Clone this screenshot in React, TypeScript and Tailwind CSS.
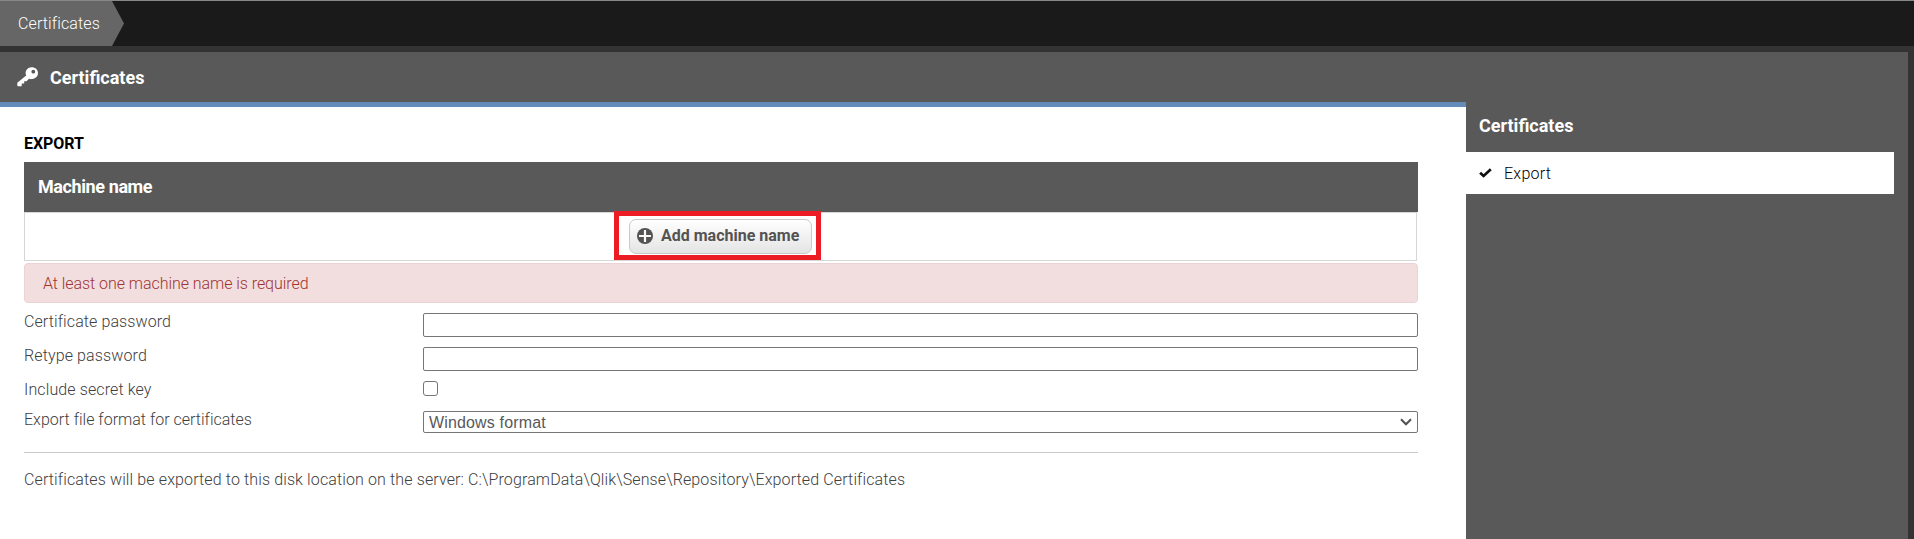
import type { ReactNode } from "react";

function KeyIcon() {
  return (
    <svg width="22" height="20" viewBox="0 0 22 20" className="shrink-0">
      <path
        fill="#fff"
        fillRule="evenodd"
        d="M14.6 0.3C10.800 0.300 8.300 3.300 8.700 6.800C8.750 7.400 8.900 7.900 9.200 8.400L0.300 15.700V18.500C0.300 19 0.600 19.300 1.100 19.300H4.700V16.600H7.200V14.200H9.500L12 11.700C12.700 12 13.600 12.200 14.500 12.100C18.200 12 21 9.600 21 6C21 2.700 18.300 0.300 14.600 0.300ZM16.300 2.800A1.900 1.900 0 1 1 16.300 6.600A1.900 1.900 0 0 1 16.300 2.800Z"
      />
    </svg>
  );
}

function PlusCircleIcon() {
  return (
    <svg width="16" height="16" viewBox="0 0 16 16" className="shrink-0">
      <circle cx="8" cy="8" r="8" fill="#545352" />
      <path d="M8 2V14M2 8H14" stroke="#fafafa" strokeWidth="2.200" />
    </svg>
  );
}

function CheckIcon() {
  return (
    <svg width="13" height="10" viewBox="0 0 13 10" className="shrink-0">
      <path d="M1.100 4.700L4.600 8L11.800 1.200" fill="none" stroke="#111" strokeWidth="2.700" />
    </svg>
  );
}

function ChevronIcon() {
  return (
    <svg width="12" height="8" viewBox="0 0 12 8" className="shrink-0">
      <path d="M1 1.300L6 6.300L11 1.300" fill="none" stroke="#505050" strokeWidth="2" />
    </svg>
  );
}

function Row({ label, className, children }: { label: ReactNode; className: string; children: ReactNode }) {
  return (
    <div className={`flex items-start ${className}`}>
      <div className="w-[399px] shrink-0 pt-px leading-5">{label}</div>
      {children}
    </div>
  );
}

export default function App() {
  return (
    <div className="flex h-[539px] w-full flex-col overflow-hidden bg-[#333] font-[Roboto,sans-serif] text-base font-light text-[#404040]">
      <header className="flex h-[46px] shrink-0 border-t border-[#858885] bg-[#1a1a1a]">
        <div className="flex w-[124px] items-center bg-[#666] pl-[18px] text-white [clip-path:polygon(0_0,112px_0,100%_50%,112px_100%,0_100%)]">
          <span className="tracking-[0.12px]">Certificates</span>
        </div>
      </header>

      <div className="mt-1.5 mr-1.5 flex min-h-0 flex-1 flex-col bg-[#595959]">
        <div className="flex h-[50px] shrink-0 items-center gap-[11px] pl-[17px] text-lg font-bold text-white">
          <KeyIcon />
          <h1 className="pt-0.5 leading-6">Certificates</h1>
        </div>

        <div className="flex min-h-0 flex-1">
          <main className="w-[1466px] shrink-0 border-t-[5px] border-[#638cba] bg-white pr-12 pl-6">
            <h2 className="pt-[27px] pb-2 leading-5 font-bold tracking-[-0.05px] text-black">EXPORT</h2>
            <div className="flex h-[50px] items-center bg-[#595959] pl-3.5 text-lg font-bold text-white">
              <span className="tracking-[-0.4px]">Machine name</span>
            </div>
            <div className="mr-px flex h-[49px] justify-center border border-[#d6d6d6]">
              <div className="-mt-0.5 -ml-1.5 flex h-[49px] w-[207px] shrink-0 items-center justify-end border-[5px] border-[#eb1c24] bg-white pt-0.5 pr-1">
                <button className="flex h-[35px] w-[183px] items-center gap-2 rounded-[7px] border border-[#c9c9c9] bg-linear-to-b from-white to-[#e4e4e4] pb-px pl-[7px] font-bold text-[#545352]">
                  <PlusCircleIcon />
                  <span>Add machine name</span>
                </button>
              </div>
            </div>

            <div className="mt-0.5 flex h-10 items-center rounded-[4px] border border-[#ebd3d5] bg-[#f2dede] pt-0.5 pl-[18px] text-[#9e3432]">
              <span className="tracking-[-0.05px]">At least one machine name is required</span>
            </div>

            <Row className="mt-2 h-[34px]" label={<span className="tracking-[0.1px]">Certificate password</span>}>
              <input type="text" className="mt-0.5 h-6 flex-1 rounded-[2px] border border-[#767676] outline-none" />
            </Row>
            <Row className="h-[34px]" label={<span className="tracking-[0.12px]">Retype password</span>}>
              <input type="text" className="mt-0.5 h-6 flex-1 rounded-[2px] border border-[#767676] outline-none" />
            </Row>
            <Row className="h-[30px]" label={<span className="tracking-[0.12px]">Include secret key</span>}>
              <input
                type="checkbox"
                className="mt-0.5 size-[15px] appearance-none rounded-[3px] border-[1.5px] border-[#767676] bg-white"
              />
            </Row>
            <Row className="h-[43px]" label={<span className="tracking-[0.01px]">Export file format for certificates</span>}>
              <div className="mt-0.5 flex h-[22px] flex-1 items-center justify-between rounded-[2px] border border-[#767676] pr-[5px] pl-[5px] font-['Liberation_Sans',sans-serif] leading-5 font-normal text-[#595959]">
                <span className="pt-px tracking-[0.15px]">Windows format</span>
                <ChevronIcon />
              </div>
            </Row>

            <p className="border-t border-[#c8c8c8] pt-[17px] leading-5 tracking-[0.124px]">
              Certificates will be exported to this disk location on the server:
              {" C:\\ProgramData\\Qlik\\Sense\\Repository\\Exported Certificates"}
            </p>
          </main>

          <aside className="min-w-0 flex-1 pr-[14px]">
            <h2 className="flex h-[50px] items-center pl-[13px] text-lg font-bold text-white">
              <span className="pb-0.5">Certificates</span>
            </h2>
            <div className="flex h-[42px] items-center gap-3 bg-white pl-[13px] text-black">
              <CheckIcon />
              <span className="pt-0.5 tracking-[0.25px]">Export</span>
            </div>
          </aside>
        </div>
      </div>
    </div>
  );
}
